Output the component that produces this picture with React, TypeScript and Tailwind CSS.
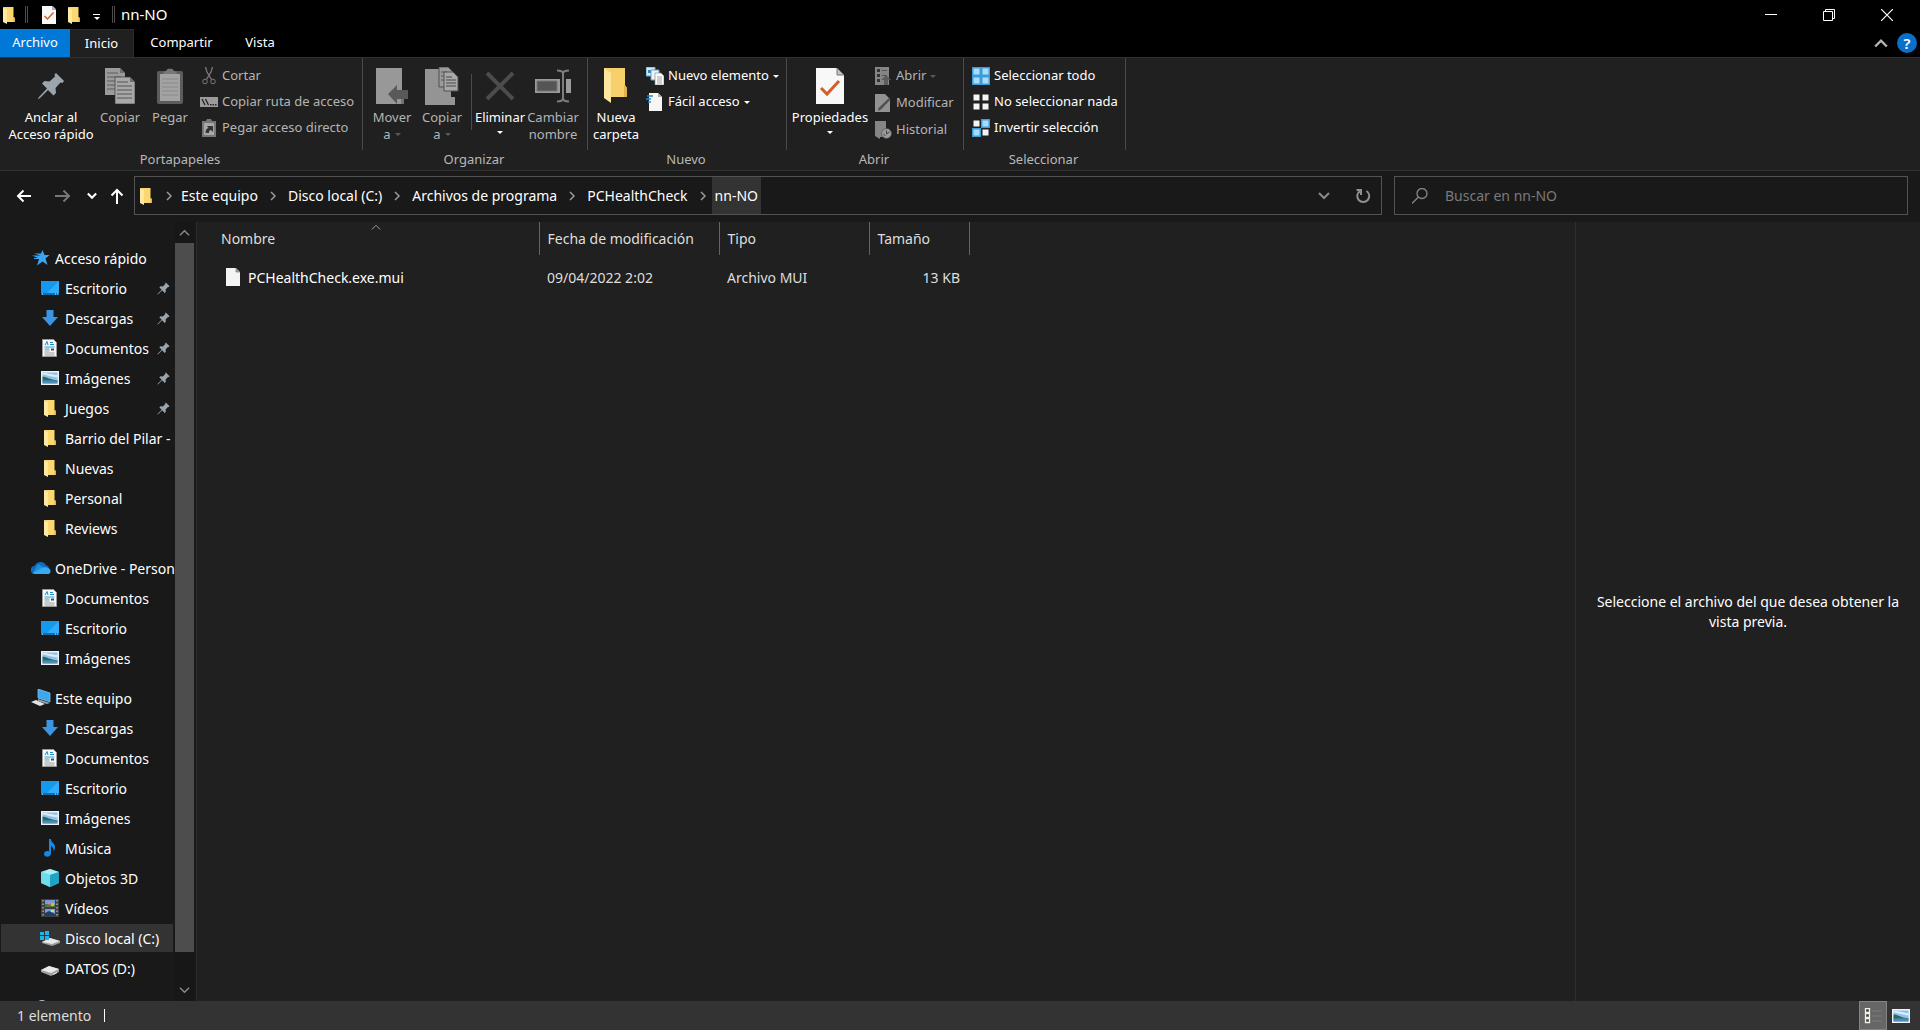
import { ReactNode } from "react";

// ---------- icons ----------
type IconProps = { className?: string };

const FolderIcon = ({ className = "h-[18px] w-[14px]" }: IconProps) => (
  <svg viewBox="0 0 14 18" className={className}>
    <path d="M1 1h10.500v10l1.500 1v4H4V3z" fill="#fbd76f" />
    <path d="M11.500 11l1.500 1v4h-1.500z" fill="#e0b04c" />
    <path d="M1 1l4 2v15l-4-2z" fill="#ffe9a2" />
  </svg>
);

const CheckDocIcon = ({ className = "h-[36px] w-[28px]" }: IconProps) => (
  <svg viewBox="0 0 28 36" className={className}>
    <path d="M0 0h21l7 7v29H0z" fill="#f8f8f8" />
    <path d="M21 0v7h7z" fill="#c4c4c4" stroke="#777" strokeWidth="1" />
    <path d="M5 20l6 6 12-13" fill="none" stroke="#d35f2c" strokeWidth="3" />
  </svg>
);

const PinIcon = ({ className = "h-[28px] w-[28px]" }: IconProps) => (
  <svg viewBox="0 0 28 28" className={className}>
    <path
      d="M19 1l8 8-1.500 2-2-.5-5 5.500.5 5-2.500 2.500-5.500-5.500L3 26l-1.500 1L1 26.500 2 25l8-8.500-5-5 2.500-2.500 5 .5 5.500-5-.5-2z"
      fill="#9aa5ae"
    />
  </svg>
);

const CopyIcon = () => (
  <svg viewBox="0 0 30 36" className="h-[36px] w-[30px]">
    <path d="M0 0h15l5 5v22H0z" fill="#9b9b9b" />
    <path d="M2 5h11M2 9h14M2 13h14M2 17h14M2 21h14" stroke="#5c5c5c" />
    <path d="M10 9h15l5 5v22H10z" fill="#a8a8a8" stroke="#3a3a3a" strokeWidth=".7" />
    <path d="M12 14h11M12 18h15M12 22h15M12 26h15M12 30h15" stroke="#555" />
    <path d="M25 9v5h5z" fill="#6f6f6f" />
    <path d="M15 0v5h5z" fill="#6f6f6f" />
  </svg>
);

const PasteIcon = () => (
  <svg viewBox="0 0 26 36" className="h-[36px] w-[26px]">
    <rect y="3" width="26" height="33" rx="2" fill="#5c5c5c" />
    <path d="M3 6h20v27H3z" fill="#a3a3a3" />
    <path d="M5 11h16M5 15h16M5 19h16M5 23h16M5 27h16" stroke="#8a8a8a" />
    <path d="M6 6c0-3 4-3 4-4.500C10 .5 16 .5 16 1.500 16 3 20 3 20 6z" fill="#777" />
  </svg>
);

const ScissorsIcon = () => (
  <svg viewBox="0 0 18 18" className="h-[18px] w-[18px]" fill="none" stroke="#7a7a7a">
    <path d="M5.500 0L7 5l4.500 7.500M12.500 0L11 5l-4.500 7.500" strokeWidth="1.300" />
    <circle cx="5" cy="14.500" r="2.300" />
    <circle cx="13" cy="14.500" r="2.300" />
  </svg>
);

const PathIcon = () => (
  <svg viewBox="0 0 18 18" className="h-[18px] w-[18px]">
    <path d="M0 4h18v10H0z" fill="#9b9b9b" />
    <path d="M2 6l3 6M5.500 6l3 6" stroke="#222" strokeWidth="1.300" />
    <path d="M10 11h1.500v1.500H10zM12.500 11H14v1.500h-1.500zM15 11h1.500v1.500H15z" fill="#222" />
  </svg>
);

const PasteLinkIcon = () => (
  <svg viewBox="0 0 18 18" className="h-[18px] w-[18px]">
    <path d="M2 2h4l1-2h4l1 2h4v16H2z" fill="#777" />
    <path d="M4 4h10v12H4z" fill="#a8a8a8" />
    <path d="M5.500 14c0-3 1-4.500 3-5L7 7h6v6l-2-2c-1.500 0-2 1.500-2 3z" fill="#333" />
  </svg>
);

const MoveIcon = () => (
  <svg viewBox="0 0 32 38" className="h-[38px] w-[32px]">
    <path d="M0 1h26v28h2v8H0z" fill="#989898" />
    <path d="M25 22v7h3v8h-3z" fill="#747474" />
    <path d="M12 27l9-9v5h11v9H21v5z" fill="#595959" />
  </svg>
);

const CopyToIcon = () => (
  <svg viewBox="0 0 34 38" className="h-[38px] w-[34px]">
    <path d="M0 2h26v28h4v8H0z" fill="#949494" />
    <path d="M14 0h9l5 5v15H14z" fill="#9b9b9b" stroke="#505050" />
    <path d="M16 5h6M16 9h6M16 13h6" stroke="#555" />
    <path d="M19 5h9l5 5v14H19z" fill="#a8a8a8" stroke="#505050" />
    <path d="M21 10h6M21 13h10M21 16h10M21 19h10" stroke="#484848" />
  </svg>
);

const DeleteIcon = () => (
  <svg viewBox="0 0 30 30" className="h-[30px] w-[30px]">
    <path d="M2 2l26 26M28 2L2 28" stroke="#4c4c4c" strokeWidth="4" />
  </svg>
);

const RenameIcon = () => (
  <svg viewBox="0 0 36 34" className="h-[34px] w-[36px]">
    <path d="M0 10h36v14H0z" fill="#9b9b9b" />
    <path d="M2 12h20v10H2z" fill="#555" stroke="#777" />
    <path d="M25 9h6v16h-6z" fill="#202020" />
    <path
      d="M22 1.500c3 0 6 .5 6 3V29c0 3-3 3.500-6 3.500M34 1.500c-3 0-6 .5-6 3V29c0 3 3 3.500 6 3.500"
      fill="none"
      stroke="#7d7d7d"
      strokeWidth="2"
    />
  </svg>
);

const NewFolderIcon = () => (
  <svg viewBox="0 0 24 35" className="h-[35px] w-[24px]">
    <path d="M0 0h21v17l2 3v9H5z" fill="#f7d06b" />
    <path d="M20 17l3 3v9h-3z" fill="#e3b24d" />
    <path d="M0 0l7 5v30l-7-5z" fill="#ffe69c" />
  </svg>
);

const NewItemIcon = () => (
  <svg viewBox="0 0 18 18" className="h-[18px] w-[18px]">
    <path d="M0 0h9v9H0z" fill="#d3e9f5" stroke="#5ca4cc" />
    <path d="M2 3h3v3H2z" fill="#3385ba" />
    <path d="M5 3h8v10H5z" fill="#f4f4f4" stroke="#5ca4cc" />
    <path d="M9 6h6l3 3v9H9z" fill="#fff" stroke="#8a8a8a" strokeWidth=".7" />
    <path d="M11 10h5M11 12h5M11 14h5M11 16h5" stroke="#888" strokeWidth=".8" />
  </svg>
);

const EasyAccessIcon = () => (
  <svg viewBox="0 0 18 18" className="h-[18px] w-[18px]">
    <path d="M3 0h9l4 4v14H3z" fill="#f6f6f6" />
    <path d="M12 0v4h4z" fill="#b0b0b0" />
    <path d="M1 3h6M0 6h5M2 9h3" stroke="#2a86d1" strokeWidth="1.500" />
  </svg>
);

const OpenIcon = () => (
  <svg viewBox="0 0 17 18" className="h-[18px] w-[17px]">
    <path d="M0 0h14v18H0z" fill="#858585" />
    <path d="M2 2h3v3H2zM2 7h3v3H2zM2 12h3v3H2z" fill="#333" />
    <path d="M7 3.500h5M7 8.500h5" stroke="#555" />
    <path d="M6 13l5-5 5 5h-3v5H9v-5z" fill="#5d5d5d" />
  </svg>
);

const EditIcon = () => (
  <svg viewBox="0 0 17 18" className="h-[18px] w-[17px]">
    <path d="M0 0h10l5 5v13H0z" fill="#929292" />
    <path d="M14 4l1.500 1.500L6 15.500 3 17l.5-3z" fill="#505050" />
  </svg>
);

const HistoryIcon = () => (
  <svg viewBox="0 0 17 18" className="h-[18px] w-[17px]">
    <path d="M0 0h11v16H5v2l-5-3z" fill="#858585" />
    <circle cx="11.500" cy="12.500" r="5" fill="#9b9b9b" stroke="#444" strokeWidth=".6" />
    <path d="M11.500 9.500v3.500l3-2M8.500 13l2 2" fill="none" stroke="#444" />
  </svg>
);

const SelectIcon = ({ fills }: { fills: string[] }) => (
  <svg viewBox="0 0 18 18" className="h-[18px] w-[18px]">
    {fills.map((fill, i) => {
      const x = (i % 2) * 9;
      const y = Math.floor(i / 2) * 9;
      return (
        <g key={i}>
          {fill !== "#f4f4f4" && <rect x={x} y={y} width="9" height="9" fill="#3d9bd6" />}
          <rect x={x + 1.5} y={y + 1.5} width="6" height="6" fill={fill} />
        </g>
      );
    })}
  </svg>
);

const StarIcon = () => (
  <svg viewBox="0 0 18 18" className="h-[18px] w-[18px]">
    <path
      d="M10.500 1l2 5h5l-4 3.500 2 6.500-5-3.500L5 16.500l2-6.500H2V9h4L0 6.500h8.500L2 4.500h7z"
      fill="#3aa5f0"
    />
  </svg>
);

const DesktopIcon = () => (
  <svg viewBox="0 0 18 14" className="h-[14px] w-[18px]">
    <path d="M0 0h18v14H0z" fill="#1499ee" />
    <path d="M18 0v12H6z" fill="#30adfa" />
    <path d="M0 13h18" stroke="#0a5f9e" strokeWidth="1.500" />
    <path d="M1 13h1M14 13h1M16 13h1" stroke="#d7efff" />
  </svg>
);

const DownloadIcon = () => (
  <svg viewBox="0 0 16 16" className="h-[16px] w-[16px]">
    <path d="M4.500 0h7v7H16l-8 9-8-9h4.500z" fill="#3a96e4" />
  </svg>
);

const DocumentIcon = () => (
  <svg viewBox="0 0 16 18" className="h-[18px] w-[16px]">
    <path d="M.5.500h11l3 3v14H.5z" fill="#f5f7f8" stroke="#9a9a9a" />
    <path d="M3 6l2-3.500L6 6M8 3.500h3M8 5.500h4" stroke="#1f86c6" fill="none" />
    <path d="M2.500 8h10M2.500 10h5" stroke="#38a0cf" />
    <path d="M9 9.500h3v2H9z" fill="#2c5577" />
    <path d="M2.500 12h5M2.500 14h10M2.500 16h10" stroke="#9b9b9b" />
  </svg>
);

const PictureIcon = () => (
  <svg viewBox="0 0 18 14" className="h-[14px] w-[18px]">
    <path d="M0 0h18v14H0z" fill="#f0f2f4" />
    <path d="M1.500 1.500h15v11h-15z" fill="#8fc3ec" />
    <path d="M1.500 3.500c4 0 6 2 15 3V4c-5 0-8-2-15-2z" fill="#d9edf9" />
    <path d="M1.500 5.500c4 0 7 3 15 4v1h-15z" fill="#2f6a5e" />
    <path d="M1.500 9.500h15v3h-15z" fill="#4a8dbc" />
  </svg>
);

const CloudIcon = () => (
  <svg viewBox="0 0 20 14" className="h-[14px] w-[20px]">
    <path d="M4 13a4 4 0 0 1-.5-8A6.500 6.500 0 0 1 15 4a5 5 0 0 1 1 9z" fill="#0f6cbd" />
    <path d="M7 3l9 5 3.500 3-2 2H4.500L2 12z" fill="#1b8fe0" />
    <path d="M2 12l9-5c3-2 9 0 8.500 3.500C19.300 12.500 18 13 16 13H4.500C3 13 2.500 12.500 2 12z" fill="#35abf2" />
  </svg>
);

const ComputerIcon = () => (
  <svg viewBox="0 0 20 18" className="h-[18px] w-[20px]">
    <path d="M7 0l12 4v9L7 9z" fill="#3ba7ef" stroke="#8cc8ee" strokeWidth=".7" />
    <path d="M0 13l5-2 9 4-5 2z" fill="#dfe4e8" />
    <path d="M7 10l12 4-3 1-9-3z" fill="#9aa4ac" />
  </svg>
);

const MusicIcon = () => (
  <svg viewBox="0 0 14 18" className="h-[18px] w-[14px]">
    <path d="M6 0h2c0 4 4 4 4 8 0 1.500-.5 2.500-1.500 4C10.500 8 9 7.500 8 7v7c0 5-7 4.500-7 1 0-2.500 3-3.500 5-2.500z" fill="#1689e6" />
  </svg>
);

const CubeIcon = () => (
  <svg viewBox="0 0 18 18" className="h-[18px] w-[18px]">
    <path d="M0 3l9-3 9 3v11l-9 4-9-4z" fill="#40c4dd" />
    <path d="M0 3l9-3 9 3-9 3z" fill="#a9edf5" />
    <path d="M9 6l9-3v11l-9 4z" fill="#21a3c5" />
    <path d="M0 3l9 3v12l-9-4z" fill="#6fdcec" />
  </svg>
);

const VideoIcon = () => (
  <svg viewBox="0 0 18 18" className="h-[18px] w-[18px]">
    <path d="M0 0h18v18H0z" fill="#3f3f3f" />
    <path d="M2 1v17M16 1v17" stroke="#a5a5a5" strokeWidth="1.500" strokeDasharray="1.500 2" />
    <path d="M4 1h10v7H4zM4 10h10v7H4z" fill="#6d9fe3" />
    <path d="M4 5h4l2-1 4 2v2H4z" fill="#4d7a3f" />
    <circle cx="8" cy="4" r="1.500" fill="#e57bbb" />
    <circle cx="11.500" cy="5.500" r="1.800" fill="#e3b93c" />
    <path d="M4 14l4-2 6 3v2H4z" fill="#243b68" />
    <path d="M10 11h3v2h-3z" fill="#e8d472" />
  </svg>
);

const DriveIcon = () => (
  <svg viewBox="0 0 18 16" className="h-[16px] w-[18px]">
    <path d="M0 10l8-4 10 3v3l-8 4-10-4z" fill="#9da0a2" />
    <path d="M0 10l8-4 10 3-8 4z" fill="#e8e9ea" />
    <path d="M12 14l4-2v1l-4 2z" fill="#f5f5f5" />
  </svg>
);

const SystemDriveIcon = () => (
  <svg viewBox="0 0 20 16" className="h-[16px] w-[20px]">
    <path d="M2 12l8-4 10 3v2l-8 3-10-3z" fill="#9da0a2" />
    <path d="M2 12l8-4 10 3-8 3z" fill="#e8e9ea" />
    <path d="M0 2h4v3H0zM5 1h4v4H5zM0 6h4v4H0zM5 6h4v4H5z" fill="#1cb4e6" />
  </svg>
);

const NetworkIcon = () => (
  <svg viewBox="0 0 20 18" className="h-[18px] w-[20px]">
    <circle cx="10" cy="7" r="6" fill="#a8c5d8" />
    <path d="M6 4c2-2 4-1 5 0l-2 4zM12 5l3-1 1 4z" fill="#4e829f" />
  </svg>
);

const FileIcon = () => (
  <svg viewBox="0 0 14 18" className="h-[18px] w-[14px]">
    <path d="M0 0h10l4 4v14H0z" fill="#f4f4f4" />
    <path d="M10 0v4h4z" fill="#a9a9a9" stroke="#666" strokeWidth=".6" />
  </svg>
);

type ChevronProps = { d: string; className?: string; width?: number };
const Chevron = ({ d, className = "h-3 w-3 text-[#9a9a9a]", width = 1.5 }: ChevronProps) => (
  <svg viewBox="0 0 12 12" className={className}>
    <path d={d} fill="none" stroke="currentColor" strokeWidth={width} />
  </svg>
);
const UP = "M1 9l5-5 5 5";
const DOWN = "M1 3l5 5 5-5";
const RIGHT = "M4 2l4 4-4 4";

const Caret = ({ className = "text-white" }: IconProps) => (
  <svg viewBox="0 0 6 3" className={`inline-block h-[3px] w-[6px] ${className}`}>
    <path d="M0 0h6L3 3z" fill="currentColor" />
  </svg>
);

// ---------- ribbon ----------
type BigButtonProps = {
  icon: ReactNode;
  lines: string[];
  width?: string;
  disabled?: boolean;
  caret?: "inline" | "below";
};

const BigButton = ({ icon, lines, width = "w-[50px]", disabled, caret }: BigButtonProps) => (
  <button
    className={`flex shrink-0 flex-col items-center whitespace-nowrap leading-[17px] ${width} ${
      disabled ? "text-[#b4b4b4]" : "text-white"
    }`}
  >
    <span className="flex h-[51px] items-center justify-center pt-1">{icon}</span>
    {lines.map((line, i) => (
      <span key={line} className="flex items-center gap-1">
        {line}
        {caret === "inline" && i === lines.length - 1 && <Caret className="text-[#5a5a5a]" />}
      </span>
    ))}
    {caret === "below" && (
      <span className="flex h-[13px] items-center">
        <Caret />
      </span>
    )}
  </button>
);

type SmallButtonProps = { icon: ReactNode; label: string; disabled?: boolean; caret?: boolean };

const SmallButton = ({ icon, label, disabled, caret }: SmallButtonProps) => (
  <button
    className={`flex h-[26px] items-center gap-1 whitespace-nowrap ${
      disabled ? "text-[#b4b4b4]" : "text-white"
    }`}
  >
    {icon}
    {label}
    {caret && <Caret className={disabled ? "text-[#5a5a5a]" : "text-white"} />}
  </button>
);

type GroupProps = { title: string; width: string; children: ReactNode };

const Group = ({ title, width, children }: GroupProps) => (
  <section className={`flex shrink-0 flex-col ${width}`}>
    <div className="flex h-[92px] border-r border-[#4a4a4a]">{children}</div>
    <h2 className="pr-[3px] text-center leading-[18px] text-[#b8b8b8]">{title}</h2>
  </section>
);

const BLUE = "#a8dcff";
const WHITE = "#f4f4f4";

const Ribbon = () => (
  <div className="flex h-[114px] shrink-0 border-y border-[#313131] bg-[#202020] text-[13px]">
    <Group title="Portapapeles" width="w-[363px]">
      <div className="flex pl-[7px]">
        <BigButton icon={<PinIcon />} lines={["Anclar al", "Acceso rápido"]} width="w-[88px]" />
        <BigButton icon={<CopyIcon />} lines={["Copiar"]} disabled />
        <BigButton icon={<PasteIcon />} lines={["Pegar"]} disabled />
      </div>
      <div className="pt-[5px] pl-[5px]">
        <SmallButton icon={<ScissorsIcon />} label="Cortar" disabled />
        <SmallButton icon={<PathIcon />} label="Copiar ruta de acceso" disabled />
        <SmallButton icon={<PasteLinkIcon />} label="Pegar acceso directo" disabled />
      </div>
    </Group>
    <Group title="Organizar" width="w-[225px]">
      <div className="flex pl-1">
        <BigButton icon={<MoveIcon />} lines={["Mover", "a"]} disabled caret="inline" />
        <BigButton icon={<CopyToIcon />} lines={["Copiar", "a"]} disabled caret="inline" />
        <div className="mt-4 mr-[3px] ml-1 h-[56px] w-px bg-[#4a4a4a]" />
        <BigButton icon={<DeleteIcon />} lines={["Eliminar"]} caret="below" />
        <BigButton icon={<RenameIcon />} lines={["Cambiar", "nombre"]} width="w-[56px]" disabled />
      </div>
    </Group>
    <Group title="Nuevo" width="w-[199px]">
      <div className="flex pl-[3px]">
        <BigButton icon={<NewFolderIcon />} lines={["Nueva", "carpeta"]} />
      </div>
      <div className="pt-[5px] pl-[5px]">
        <SmallButton icon={<NewItemIcon />} label="Nuevo elemento" caret />
        <SmallButton icon={<EasyAccessIcon />} label="Fácil acceso" caret />
      </div>
    </Group>
    <Group title="Abrir" width="w-[177px]">
      <div className="flex pl-[5px]">
        <BigButton icon={<CheckDocIcon />} lines={["Propiedades"]} width="w-[76px]" caret="below" />
      </div>
      <div className="flex flex-col gap-px pt-[5px] pl-[7px]">
        <SmallButton icon={<OpenIcon />} label="Abrir" disabled caret />
        <SmallButton icon={<EditIcon />} label="Modificar" disabled />
        <SmallButton icon={<HistoryIcon />} label="Historial" disabled />
      </div>
    </Group>
    <Group title="Seleccionar" width="w-[162px]">
      <div className="pt-[5px] pl-2">
        <SmallButton icon={<SelectIcon fills={[BLUE, BLUE, BLUE, BLUE]} />} label="Seleccionar todo" />
        <SmallButton icon={<SelectIcon fills={[WHITE, WHITE, WHITE, WHITE]} />} label="No seleccionar nada" />
        <SmallButton icon={<SelectIcon fills={[WHITE, BLUE, BLUE, WHITE]} />} label="Invertir selección" />
      </div>
    </Group>
  </div>
);

// ---------- header ----------
const TitleBar = () => (
  <header className="flex h-[29px] shrink-0 items-center bg-black">
    <FolderIcon className="ml-[2px] h-[18px] w-[14px]" />
    <span className="ml-[9px] h-[17px] w-[3px] border-x border-[#4d4d4d]" />
    <button aria-label="Propiedades" className="ml-[14px]">
      <CheckDocIcon className="h-[18px] w-[14px]" />
    </button>
    <button aria-label="Nueva carpeta" className="ml-[11px]">
      <FolderIcon />
    </button>
    <button aria-label="Personalizar barra" className="ml-3 flex flex-col items-center gap-[2px] pt-1">
      <span className="h-px w-[7px] bg-white" />
      <Caret />
    </button>
    <span className="ml-3 h-[17px] w-[3px] border-x border-[#4d4d4d]" />
    <h1 className="ml-[6px] text-[15px] text-white">nn-NO</h1>
    <div className="ml-auto flex h-full text-white">
      <button aria-label="Minimizar" className="flex w-[58px] items-center justify-center">
        <svg viewBox="0 0 12 12" className="h-3 w-3">
          <path d="M0 5.500h12" stroke="currentColor" />
        </svg>
      </button>
      <button aria-label="Restaurar" className="flex w-[58px] items-center justify-center">
        <svg viewBox="0 0 12 12" className="h-3 w-3" fill="none" stroke="currentColor">
          <path d="M.5 2.500h9v9h-9zM2.500 2.500v-2h9v9h-2" />
        </svg>
      </button>
      <button aria-label="Cerrar" className="mr-1 flex w-[58px] items-center justify-center">
        <svg viewBox="0 0 12 12" className="h-3 w-3">
          <path d="M0 0l12 12M12 0L0 12" stroke="currentColor" strokeWidth="1.200" />
        </svg>
      </button>
    </div>
  </header>
);

const Tabs = () => (
  <nav className="flex h-[28px] shrink-0 bg-black text-[13px] text-white">
    <button className="w-[70px] bg-[#0078d7]">Archivo</button>
    <button className="w-[64px] border-t border-r border-[#2b2b2b] bg-[#202020]">Inicio</button>
    <button className="w-[95px]">Compartir</button>
    <button className="w-[62px]">Vista</button>
    <div className="mr-[3px] ml-auto flex items-center gap-[9px]">
      <button aria-label="Minimizar la cinta de opciones">
        <Chevron d={UP} width={2} className="h-[14px] w-[14px] text-[#b4b4b4]" />
      </button>
      <button
        aria-label="Ayuda"
        className="flex h-[20px] w-[20px] items-center justify-center rounded-full bg-[#0a6fc8] text-[15px] font-semibold"
      >
        ?
      </button>
    </div>
  </nav>
);

const crumbs = ["Este equipo", "Disco local (C:)", "Archivos de programa", "PCHealthCheck", "nn-NO"];

const Arrow = ({ d, className }: { d: string; className: string }) => (
  <svg viewBox="0 0 16 16" className={`h-4 w-4 ${className}`}>
    <path d={d} fill="none" stroke="currentColor" strokeWidth="2" />
  </svg>
);

const AddressBar = () => (
  <div className="flex h-[51px] shrink-0 items-start bg-[#191919] pt-[5px] pr-3 text-[14px] text-white">
    <div className="flex h-[39px] w-[134px] shrink-0 items-center">
      <button aria-label="Atrás" className="ml-4">
        <Arrow d="M15 8H2M7.500 2.500L2 8l5.500 5.500" className="text-white" />
      </button>
      <button aria-label="Adelante" className="ml-[23px]">
        <Arrow d="M0 8h14M8.500 2.500L14 8l-5.500 5.500" className="text-[#777]" />
      </button>
      <button aria-label="Ubicaciones recientes" className="ml-4">
        <Chevron d={DOWN} width={2.5} className="h-[10px] w-[10px] text-white" />
      </button>
      <button aria-label="Arriba" className="ml-3">
        <Arrow d="M8 16V2M2.500 7.500L8 2l5.500 5.500" className="text-white" />
      </button>
    </div>
    <div className="flex h-[39px] grow items-center border border-[#535353]">
      <FolderIcon className="ml-1 h-[18px] w-[14px]" />
      {crumbs.map((crumb, i) => (
        <div key={crumb} className="flex h-full items-center">
          <Chevron d={RIGHT} className={`h-3 w-3 text-[#9a9a9a] ${i === 0 ? "ml-[10px]" : "mx-[3px]"}`} />
          <button
            className={`whitespace-nowrap ${
              i === crumbs.length - 1 ? "h-[37px] bg-[#333] px-[3px]" : "h-full px-[6px]"
            }`}
          >
            {crumb}
          </button>
        </div>
      ))}
      <button aria-label="Ubicaciones anteriores" className="ml-auto">
        <Chevron d={DOWN} width={2} className="h-3 w-3 text-[#8a8a8a]" />
      </button>
      <button aria-label="Actualizar" className="mr-[10px] ml-[25px]">
        <svg viewBox="0 0 16 16" className="h-4 w-4" fill="none" stroke="#8f8f8f" strokeWidth="2">
          <path d="M11.500 3A6 6 0 1 1 5 3M1.500 2H6v5" />
        </svg>
      </button>
    </div>
    <label className="ml-3 flex h-[39px] w-[514px] shrink-0 items-center border border-[#535353] pl-[17px]">
      <svg viewBox="0 0 16 16" className="h-4 w-4" fill="none" stroke="#858585" strokeWidth="1.300">
        <circle cx="10" cy="5.500" r="5" />
        <path d="M6.500 9L0 15.500" />
      </svg>
      <input
        type="search"
        aria-label="Buscar"
        placeholder="Buscar en nn-NO"
        className="ml-[17px] grow bg-transparent outline-none placeholder:text-[#7a7a7a]"
      />
    </label>
  </div>
);

// ---------- sidebar ----------
type NavItem = { icon: ReactNode; label: string; pinned?: boolean; selected?: boolean };
type NavSection = { icon: ReactNode; label: string; items: NavItem[] };

const sections: NavSection[] = [
  {
    icon: <StarIcon />,
    label: "Acceso rápido",
    items: [
      { icon: <DesktopIcon />, label: "Escritorio", pinned: true },
      { icon: <DownloadIcon />, label: "Descargas", pinned: true },
      { icon: <DocumentIcon />, label: "Documentos", pinned: true },
      { icon: <PictureIcon />, label: "Imágenes", pinned: true },
      { icon: <FolderIcon />, label: "Juegos", pinned: true },
      { icon: <FolderIcon />, label: "Barrio del Pilar -" },
      { icon: <FolderIcon />, label: "Nuevas" },
      { icon: <FolderIcon />, label: "Personal" },
      { icon: <FolderIcon />, label: "Reviews" },
    ],
  },
  {
    icon: <CloudIcon />,
    label: "OneDrive - Person",
    items: [
      { icon: <DocumentIcon />, label: "Documentos" },
      { icon: <DesktopIcon />, label: "Escritorio" },
      { icon: <PictureIcon />, label: "Imágenes" },
    ],
  },
  {
    icon: <ComputerIcon />,
    label: "Este equipo",
    items: [
      { icon: <DownloadIcon />, label: "Descargas" },
      { icon: <DocumentIcon />, label: "Documentos" },
      { icon: <DesktopIcon />, label: "Escritorio" },
      { icon: <PictureIcon />, label: "Imágenes" },
      { icon: <MusicIcon />, label: "Música" },
      { icon: <CubeIcon />, label: "Objetos 3D" },
      { icon: <VideoIcon />, label: "Vídeos" },
      { icon: <SystemDriveIcon />, label: "Disco local (C:)", selected: true },
      { icon: <DriveIcon />, label: "DATOS (D:)" },
    ],
  },
];

const Sidebar = () => (
  <aside className="flex w-[197px] shrink-0 border-r border-[#2b2b2b] bg-[#191919] text-[14px] text-white">
    <nav className="flex min-w-0 flex-1 flex-col gap-[10px] overflow-hidden pt-[21px]">
      {sections.map((section) => (
        <div key={section.label} className="flex shrink-0 flex-col">
          <a href="#" className="flex h-[30px] items-center whitespace-nowrap">
            <span className="mr-1 ml-[30px] flex w-[21px] shrink-0 justify-center">{section.icon}</span>
            {section.label}
          </a>
          {section.items.map((item) => (
            <a
              key={item.label}
              href="#"
              className={`my-px mr-[2px] ml-px flex h-[28px] items-center whitespace-nowrap ${
                item.selected ? "bg-[#333]" : ""
              }`}
            >
              <span className="mr-[5px] ml-[39px] flex w-[20px] shrink-0 justify-center">{item.icon}</span>
              {item.label}
              {item.pinned && <PinIcon className="mr-[3px] ml-auto h-[13px] w-[13px] shrink-0" />}
            </a>
          ))}
        </div>
      ))}
      <div className="flex h-[30px] shrink-0 items-center pl-[32px]">
        <NetworkIcon />
      </div>
    </nav>
    <div className="mr-[2px] flex w-[19px] flex-col items-center bg-[#171717]">
      <button aria-label="Desplazar arriba" className="flex h-[21px] items-center">
        <Chevron d={UP} className="h-[11px] w-[11px] text-[#8a8a8a]" />
      </button>
      <div className="w-full grow bg-[#4d4d4d]" />
      <button aria-label="Desplazar abajo" className="flex h-[49px] items-end pb-[5px]">
        <Chevron d={DOWN} className="h-[11px] w-[11px] text-[#8a8a8a]" />
      </button>
    </div>
  </aside>
);

// ---------- file list ----------
const FileList = () => (
  <main className="min-w-0 grow text-[14px]">
    <table className="w-[772px] table-fixed border-collapse text-left whitespace-nowrap">
      <thead className="text-[#dedede]">
        <tr className="h-[33px]">
          <th className="relative w-[342px] border-r border-[#636363] pl-6 font-normal">
            Nombre
            <Chevron
              d={UP}
              width={1.2}
              className="absolute top-0 left-[174px] h-[10px] w-[10px] text-[#9a9a9a]"
            />
          </th>
          <th className="w-[180px] border-r border-[#636363] pl-2 font-normal">Fecha de modificación</th>
          <th className="w-[150px] border-r border-[#636363] pl-2 font-normal">Tipo</th>
          <th className="w-[100px] border-r border-[#636363] pl-2 font-normal">Tamaño</th>
        </tr>
      </thead>
      <tbody className="text-[#dedede]">
        <tr className="h-[40px]">
          <td className="pt-1 text-white">
            <span className="flex items-center gap-2 pl-[29px]">
              <FileIcon />
              PCHealthCheck.exe.mui
            </span>
          </td>
          <td className="pt-1 pl-2">09/04/2022 2:02</td>
          <td className="pt-1 pl-2">Archivo MUI</td>
          <td className="pt-1 pr-[9px] text-right">13 KB</td>
        </tr>
      </tbody>
    </table>
  </main>
);

const StatusBar = () => (
  <footer className="flex h-[29px] shrink-0 items-center bg-[#333] text-[14px] text-[#dedede]">
    <span className="pl-[17px]">1 elemento</span>
    <span className="ml-[13px] h-[13px] w-px bg-white" />
    <div className="mr-[5px] ml-auto flex h-full items-center">
      <button
        aria-label="Detalles"
        className="flex h-full w-[28px] items-center justify-center border border-[#838383] bg-[#666]"
      >
        <svg viewBox="0 0 18 16" className="h-[16px] w-[18px]">
          <path d="M1.500.500h4v4h-4zM1.500 5.500h4v4h-4zM1.500 10.500h4v4h-4z" fill="#444" stroke="#f0efe8" strokeWidth="1.300" />
          <path d="M8 3h10M8 8h10M8 13h10" stroke="#7c7c7c" />
        </svg>
      </button>
      <button aria-label="Iconos grandes" className="flex h-full w-[28px] items-center justify-center">
        <PictureIcon />
      </button>
    </div>
  </footer>
);

const App = () => {
  return (
    <div className="flex h-screen flex-col overflow-hidden bg-[#202020] font-['Noto_Sans',sans-serif]">
      <TitleBar />
      <Tabs />
      <Ribbon />
      <AddressBar />
      <div className="flex min-h-0 grow">
        <Sidebar />
        <FileList />
        <aside className="flex w-[345px] shrink-0 items-center justify-center border-l border-[#2f2f2f] px-4 text-center text-[14px] leading-5 text-white">
          <p>Seleccione el archivo del que desea obtener la vista previa.</p>
        </aside>
      </div>
      <StatusBar />
    </div>
  );
};

export default App;
